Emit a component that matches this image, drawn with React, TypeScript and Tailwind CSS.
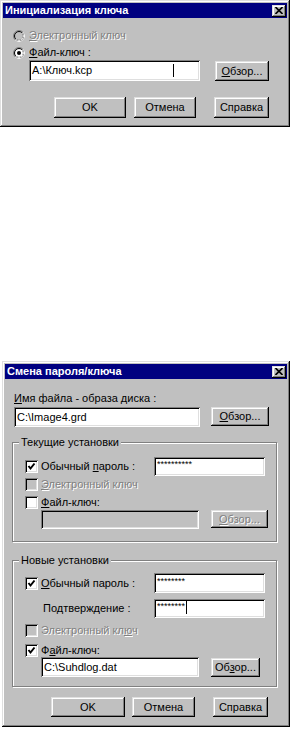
import React from 'react';

const raised = 'bg-[#c0c0c0] shadow-[inset_-1px_-1px_#000,inset_1px_1px_#dfdfdf,inset_-2px_-2px_#808080,inset_2px_2px_#fff]';
const sunken = 'shadow-[inset_1px_1px_#808080,inset_-1px_-1px_#fff,inset_2px_2px_#000,inset_-2px_-2px_#dfdfdf]';
const dim = 'text-[#808080] [text-shadow:1px_1px_0_#fff]';

const Key = ({ children }: { children: React.ReactNode }) => (
    <span className="underline underline-offset-[1px]">{children}</span>
);

const Radio = ({ checked = false, disabled = false }: { checked?: boolean; disabled?: boolean }) => (
    <svg width="12" height="12" viewBox="0 0 12 12" className="shrink-0">
        <circle cx="6" cy="6" r="4" fill={disabled ? '#c0c0c0' : '#fff'} />
        <circle cx="6" cy="6" r="5.5" fill="none" stroke="#808080" />
        <path d="M9.89 2.11 A5.5 5.5 0 0 1 2.11 9.89" fill="none" stroke="#fff" />
        <circle cx="6" cy="6" r="4.5" fill="none" stroke="#000" />
        <path d="M9.18 2.82 A4.5 4.5 0 0 1 2.82 9.18" fill="none" stroke="#dfdfdf" />
        {checked && <circle cx="6" cy="6" r="2" fill="#000" />}
    </svg>
);

const Check = ({ checked = false, disabled = false }: { checked?: boolean; disabled?: boolean }) => (
    <div className={`${sunken} ${disabled ? 'bg-[#c0c0c0]' : 'bg-white'} w-[13px] h-[13px] shrink-0 relative`}>
        {checked && (
            <svg width="13" height="13" viewBox="0 0 13 13" className="absolute left-0 top-0">
                <polyline points="3.5,6 5.5,8.5 9.5,3.5" fill="none" stroke="#000" strokeWidth="2" />
            </svg>
        )}
    </div>
);

const Btn = ({ className = '', disabled = false, children }: { className?: string; disabled?: boolean; children: React.ReactNode }) => (
    <div className={`${raised} flex items-center justify-center shrink-0 ${disabled ? dim : ''} ${className}`}>
        {children}
    </div>
);

const Field = ({ className = '', disabled = false, children }: { className?: string; disabled?: boolean; children?: React.ReactNode }) => (
    <div className={`${sunken} ${disabled ? 'bg-[#c0c0c0]' : 'bg-white'} relative flex items-center pl-[3px] shrink-0 whitespace-nowrap ${className}`}>
        {children}
    </div>
);

const TitleBar = ({ title }: { title: string }) => (
    <div className="h-[15px] bg-[#000080] flex items-center justify-between pl-[2px] pr-[1px]">
        <span className="text-white font-bold">{title}</span>
        <div className={`${raised} w-[14px] h-[12px] flex items-center justify-center`}>
            <svg width="8" height="7" viewBox="0 0 8 7">
                <path d="M0.5 0 L7.5 7 M7.5 0 L0.5 7" stroke="#000" strokeWidth="1.6" />
            </svg>
        </div>
    </div>
);

const Group = ({ label, className = '', children }: { label: string; className?: string; children: React.ReactNode }) => (
    <div className={`relative border border-[#808080] shadow-[1px_1px_0_#fff,inset_1px_1px_0_#fff] ${className}`}>
        <span className="absolute top-[-7px] left-[6px] bg-[#c0c0c0] px-[2px]">{label}</span>
        {children}
    </div>
);

export default function App() {
    return (
        <div className="w-[293px] min-h-[733px] bg-white font-['Liberation_Sans',Arial,sans-serif] text-[11px] leading-[13px] text-black">
            {/* Инициализация ключа */}
            <div className={`${raised} w-[290px] h-[127px] p-[3px]`}>
                <TitleBar title="Инициализация ключа" />
                <div className="mt-[11px] h-[13px] pl-[10px] flex items-center gap-[4px]">
                    <Radio disabled />
                    <span className={dim}><Key>Э</Key>лектронный ключ</span>
                </div>
                <div className="mt-[4px] h-[13px] pl-[10px] flex items-center gap-[4px]">
                    <Radio checked />
                    <span><Key>Ф</Key>айл-ключ :</span>
                </div>
                <div className="mt-[1px] flex items-start">
                    <Field className="ml-[26px] w-[171px] h-[21px]">
                        A:\Ключ.kcp
                        <span className="absolute left-[144px] top-[4px] w-px h-[13px] bg-black" />
                    </Field>
                    <Btn className="ml-[15px] mt-[1px] w-[54px] h-[20px]"><span><Key>О</Key>бзор...</span></Btn>
                </div>
                <div className="mt-[16px] flex">
                    <Btn className="ml-[51px] w-[72px] h-[21px]">OK</Btn>
                    <Btn className="ml-[8px] w-[62px] h-[21px]">Отмена</Btn>
                    <Btn className="ml-[18px] w-[55px] h-[21px]">Справка</Btn>
                </div>
            </div>

            {/* Смена пароля/ключа */}
            <div className={`${raised} ml-[2px] mt-[234px] w-[288px] h-[366px] p-[3px]`}>
                <TitleBar title="Смена пароля/ключа" />
                <div className="mt-[13px] h-[13px] pl-[9px]">
                    <Key>И</Key>мя файла - образа диска :
                </div>
                <div className="mt-[2px] flex items-start">
                    <Field className="ml-[9px] w-[186px] h-[20px]">C:\Image4.grd</Field>
                    <Btn className="ml-[11px] w-[58px] h-[19px]"><span><Key>О</Key>бзор...</span></Btn>
                </div>

                <Group label="Текущие установки" className="mt-[15px] ml-[7px] w-[265px] h-[100px]">
                    <div className="mt-[14px] h-[19px] flex items-center pl-[12px]">
                        <Check checked />
                        <span className="ml-[3px]">Обычный <Key>п</Key>ароль :</span>
                        <Field className="ml-auto mr-[11px] w-[111px] h-[19px] items-start pt-[3px] text-[9px] leading-[9px]">**********</Field>
                    </div>
                    <div className="mt-[2px] h-[13px] flex items-center pl-[12px]">
                        <Check disabled />
                        <span className={`ml-[3px] ${dim}`}><Key>Э</Key>лектронный ключ</span>
                    </div>
                    <div className="mt-[5px] h-[13px] flex items-center pl-[12px]">
                        <Check />
                        <span className="ml-[3px]"><Key>Ф</Key>айл-ключ:</span>
                    </div>
                    <div className="mt-[1px] flex items-start">
                        <Field disabled className="ml-[28px] w-[158px] h-[19px]" />
                        <Btn disabled className="ml-[12px] w-[57px] h-[18px]"><span><Key>О</Key>бзор...</span></Btn>
                    </div>
                </Group>

                <Group label="Новые установки" className="mt-[18px] ml-[7px] w-[265px] h-[127px]">
                    <div className="mt-[12px] h-[20px] flex items-center pl-[12px]">
                        <Check checked />
                        <span className="ml-[3px]"><Key>О</Key>бычный пароль :</span>
                        <Field className="ml-auto mr-[11px] w-[111px] h-[20px] items-start pt-[4px] text-[9px] leading-[9px]">********</Field>
                    </div>
                    <div className="mt-[6px] h-[19px] flex items-center pl-[30px]">
                        <span>По<Key>д</Key>тверждение :</span>
                        <Field className="ml-auto mr-[11px] w-[111px] h-[19px] items-start pt-[3px] text-[9px] leading-[9px]">
                            ********
                            <span className="ml-px mt-[-1px] w-px h-[13px] bg-black" />
                        </Field>
                    </div>
                    <div className="mt-[6px] h-[13px] flex items-center pl-[12px]">
                        <Check disabled />
                        <span className={`ml-[3px] ${dim}`}>Электронный кл<Key>ю</Key>ч</span>
                    </div>
                    <div className="mt-[7px] h-[13px] flex items-center pl-[12px]">
                        <Check checked />
                        <span className="ml-[3px]">Ф<Key>а</Key>йл-ключ:</span>
                    </div>
                    <div className="flex items-start">
                        <Field className="ml-[28px] w-[158px] h-[20px]">C:\Suhdlog.dat</Field>
                        <Btn className="ml-[12px] mt-[1px] w-[49px] h-[19px]"><span>Об<Key>з</Key>ор...</span></Btn>
                    </div>
                </Group>

                <div className="mt-[10px] flex">
                    <Btn className="ml-[46px] w-[74px] h-[20px]">OK</Btn>
                    <Btn className="ml-[7px] w-[63px] h-[20px]">Отмена</Btn>
                    <Btn className="ml-[18px] w-[55px] h-[20px]">Справка</Btn>
                </div>
            </div>
        </div>
    );
}
